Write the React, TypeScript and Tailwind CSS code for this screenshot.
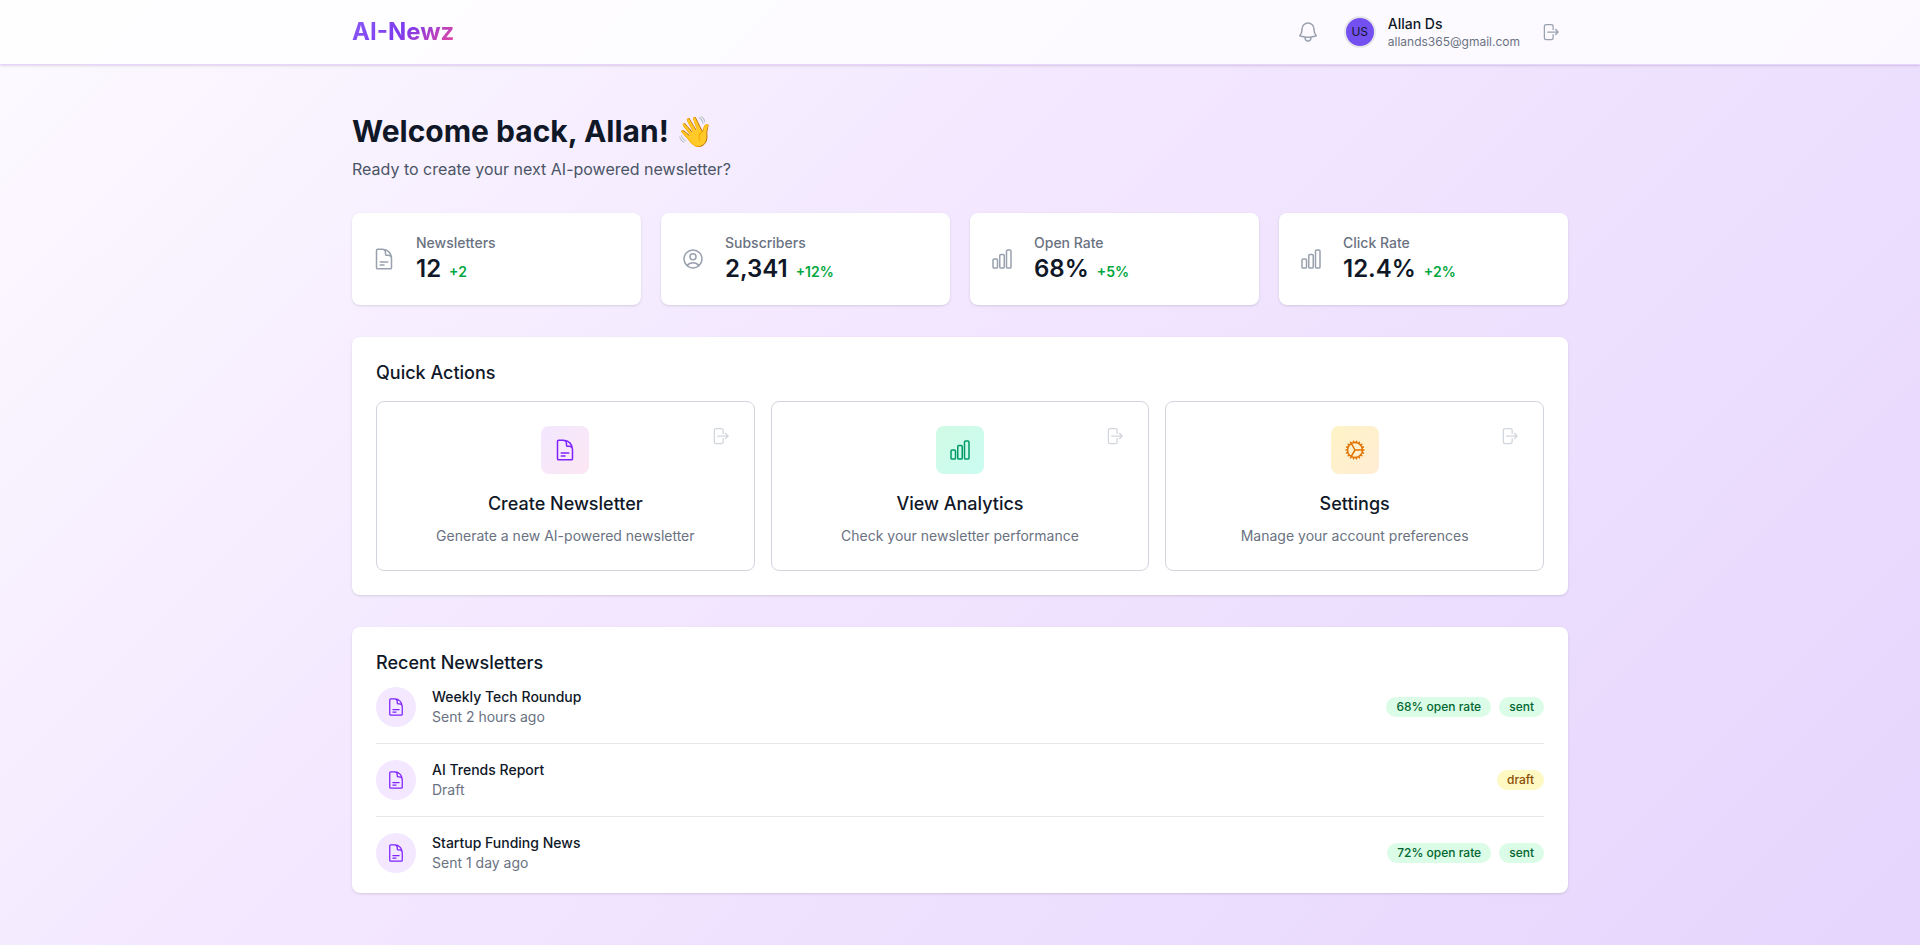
import React from "react";
import {
  HiOutlineArrowRightOnRectangle,
  HiOutlineBell,
  HiOutlineChartBar,
  HiOutlineCog,
  HiOutlineDocumentText,
  HiOutlineUserCircle,
} from "react-icons/hi2";

const stats = [
  { label: "Newsletters", value: "12", delta: "+2", Icon: HiOutlineDocumentText },
  { label: "Subscribers", value: "2,341", delta: "+12%", Icon: HiOutlineUserCircle },
  { label: "Open Rate", value: "68%", delta: "+5%", Icon: HiOutlineChartBar },
  { label: "Click Rate", value: "12.4%", delta: "+2%", Icon: HiOutlineChartBar },
];

const actions = [
  {
    title: "Create Newsletter",
    desc: "Generate a new AI-powered newsletter",
    Icon: HiOutlineDocumentText,
    box: "bg-gradient-to-br from-purple-100 to-pink-100",
    color: "text-violet-600",
  },
  {
    title: "View Analytics",
    desc: "Check your newsletter performance",
    Icon: HiOutlineChartBar,
    box: "bg-gradient-to-br from-emerald-100 to-teal-100",
    color: "text-emerald-600",
  },
  {
    title: "Settings",
    desc: "Manage your account preferences",
    Icon: HiOutlineCog,
    box: "bg-gradient-to-br from-amber-100 to-orange-100",
    color: "text-amber-600",
  },
];

const recent = [
  { title: "Weekly Tech Roundup", sub: "Sent 2 hours ago", rate: "68% open rate", status: "sent" },
  { title: "AI Trends Report", sub: "Draft", rate: "", status: "draft" },
  { title: "Startup Funding News", sub: "Sent 1 day ago", rate: "72% open rate", status: "sent" },
];

export default function App() {
  return (
    <div className="min-h-screen bg-[linear-gradient(135deg,#fdfaff_0%,#f3e8ff_40%,#e6d5fd_100%)] font-['Inter',sans-serif] text-gray-900">
      <header className="bg-white/80 border-b border-purple-200 shadow-sm">
        <div className="max-w-7xl mx-auto px-8 h-16 flex items-center justify-between">
          <span className="text-2xl font-bold bg-[linear-gradient(135deg,#8b5cf6_0%,#7c3aed_50%,#ec4899_100%)] bg-clip-text text-transparent">
            AI-Newz
          </span>
          <div className="flex items-center">
            <HiOutlineBell className="w-6 h-6 text-gray-400" />
            <div className="ml-6 w-8 h-8 rounded-full border-2 border-gray-200 bg-[#7450f0] flex items-center justify-center text-xs">
              US
            </div>
            <div className="ml-3">
              <div className="text-sm font-medium leading-5">Allan Ds</div>
              <div className="text-xs leading-4 text-gray-500">allands365@gmail.com</div>
            </div>
            <HiOutlineArrowRightOnRectangle className="ml-5 mr-2 w-5 h-5 text-gray-400" />
          </div>
        </div>
      </header>

      <main className="max-w-7xl mx-auto px-8 py-12">
        <h1 className="text-3xl font-bold">Welcome back, Allan! 👋</h1>
        <p className="mt-2 mb-8 text-base text-gray-600">Ready to create your next AI-powered newsletter?</p>

        <div className="grid grid-cols-4 gap-5 mb-8">
          {stats.map(({ label, value, delta, Icon }) => (
            <div key={label} className="bg-white rounded-lg shadow p-5 flex items-center">
              <Icon className="w-6 h-6 text-gray-400 shrink-0" />
              <div className="ml-5">
                <div className="text-sm font-medium text-gray-500">{label}</div>
                <div className="flex items-baseline">
                  <span className="text-2xl font-semibold">{value}</span>
                  <span className="ml-2 text-sm font-semibold text-green-600">{delta}</span>
                </div>
              </div>
            </div>
          ))}
        </div>

        <section className="bg-white rounded-lg shadow p-6 mb-8">
          <h2 className="text-lg leading-6 font-medium mb-4">Quick Actions</h2>
          <div className="grid grid-cols-3 gap-4">
            {actions.map(({ title, desc, Icon, box, color }) => (
              <div key={title} className="relative border border-gray-300 rounded-lg p-6 flex flex-col items-center text-center">
                <div className={`w-12 h-12 rounded-lg flex items-center justify-center ${box}`}>
                  <Icon className={`w-6 h-6 ${color}`} />
                </div>
                <div className="mt-4 text-lg font-medium">{title}</div>
                <div className="mt-2 text-sm text-gray-500">{desc}</div>
                <HiOutlineArrowRightOnRectangle className="absolute top-6 right-6 w-5 h-5 text-gray-300" />
              </div>
            ))}
          </div>
        </section>

        <section className="bg-white rounded-lg shadow p-6">
          <h2 className="text-lg leading-6 font-medium">Recent Newsletters</h2>
          <ul className="-mt-1 -mb-5 divide-y divide-gray-200">
            {recent.map((r) => (
              <li key={r.title} className="py-4 flex items-center">
                <div className="w-10 h-10 rounded-full bg-purple-100 flex items-center justify-center shrink-0">
                  <HiOutlineDocumentText className="w-5 h-5 text-violet-600" />
                </div>
                <div className="ml-4 flex-1">
                  <div className="text-sm font-medium">{r.title}</div>
                  <div className="text-sm text-gray-500">{r.sub}</div>
                </div>
                <div className="flex items-center gap-2">
                  {r.rate && (
                    <span className="px-2.5 py-0.5 rounded-full bg-green-100 text-green-800 text-xs font-medium">{r.rate}</span>
                  )}
                  <span
                    className={
                      r.status === "sent"
                        ? "px-2.5 py-0.5 rounded-full bg-green-100 text-green-800 text-xs font-medium"
                        : "px-2.5 py-0.5 rounded-full bg-yellow-100 text-yellow-800 text-xs font-medium"
                    }
                  >
                    {r.status}
                  </span>
                </div>
              </li>
            ))}
          </ul>
        </section>
      </main>
    </div>
  );
}
